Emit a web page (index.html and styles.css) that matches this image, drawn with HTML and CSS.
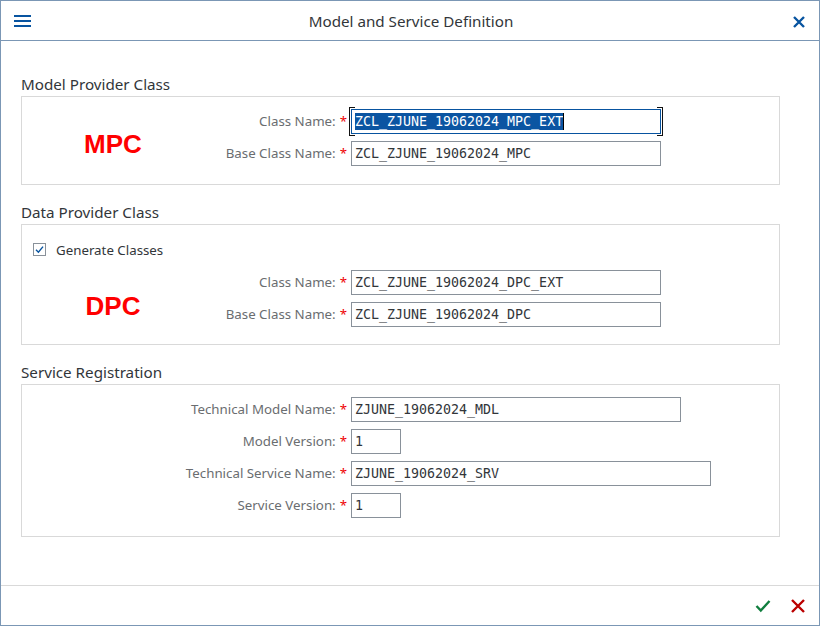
FILE: index.html
```html
<!DOCTYPE html>
<html lang="en">
<head>
<meta charset="utf-8">
<title>Model and Service Definition</title>
<link rel="stylesheet" href="styles.css">
</head>
<body>
<div class="dialog">
  <header class="dlg-header">
    <button class="icon-btn menu-btn" aria-label="Menu">
      <svg width="18" height="14" viewBox="0 0 18 14"><rect x="0" y="1" width="17" height="2" fill="#0854a0"/><rect x="0" y="6" width="17" height="2" fill="#0854a0"/><rect x="0" y="11" width="17" height="2" fill="#0854a0"/></svg>
    </button>
    <h1 class="dlg-title">Model and Service Definition</h1>
    <button class="icon-btn close-btn" aria-label="Close">
      <svg width="14" height="14" viewBox="0 0 14 14"><path d="M2 2 L12 12 M12 2 L2 12" stroke="#0854a0" stroke-width="2.4" stroke-linecap="butt"/></svg>
    </button>
  </header>

  <main class="dlg-content">
    <section class="group">
      <h2 class="group-title">Model Provider Class</h2>
      <div class="group-box box-mpc">
        <span class="annot annot-mpc">MPC</span>
        <div class="form-row">
          <label class="f-label">Class Name:<span class="req">*</span></label>
          <div class="f-input w310 focused"><span class="sel">ZCL_ZJUNE_19062024_MPC_EXT</span><span class="caret"></span></div>
        </div>
        <div class="form-row">
          <label class="f-label">Base Class Name:<span class="req">*</span></label>
          <div class="f-input w310">ZCL_ZJUNE_19062024_MPC</div>
        </div>
      </div>
    </section>

    <section class="group">
      <h2 class="group-title">Data Provider Class</h2>
      <div class="group-box box-dpc">
        <span class="annot annot-dpc">DPC</span>
        <div class="check-row">
          <span class="checkbox">
            <svg width="13" height="13" viewBox="0 0 13 13"><rect x="0.5" y="0.5" width="12" height="12" fill="#fff" stroke="#89919a"/><path d="M3 6.8 L5.4 9.2 L10 3.6" fill="none" stroke="#0854a0" stroke-width="1.4"/></svg>
          </span>
          <span class="check-text">Generate Classes</span>
        </div>
        <div class="form-row">
          <label class="f-label">Class Name:<span class="req">*</span></label>
          <div class="f-input w310">ZCL_ZJUNE_19062024_DPC_EXT</div>
        </div>
        <div class="form-row">
          <label class="f-label">Base Class Name:<span class="req">*</span></label>
          <div class="f-input w310">ZCL_ZJUNE_19062024_DPC</div>
        </div>
      </div>
    </section>

    <section class="group">
      <h2 class="group-title">Service Registration</h2>
      <div class="group-box">
        <div class="form-row">
          <label class="f-label">Technical Model Name:<span class="req">*</span></label>
          <div class="f-input w330">ZJUNE_19062024_MDL</div>
        </div>
        <div class="form-row">
          <label class="f-label">Model Version:<span class="req">*</span></label>
          <div class="f-input w50">1</div>
        </div>
        <div class="form-row">
          <label class="f-label">Technical Service Name:<span class="req">*</span></label>
          <div class="f-input w360">ZJUNE_19062024_SRV</div>
        </div>
        <div class="form-row">
          <label class="f-label">Service Version:<span class="req">*</span></label>
          <div class="f-input w50">1</div>
        </div>
      </div>
    </section>
  </main>

  <footer class="dlg-footer">
    <button class="icon-btn ok-btn" aria-label="OK">
      <svg width="16" height="14" viewBox="0 0 16 14"><path d="M1.5 7 L5.8 11.5 L14.5 2" fill="none" stroke="#107e3e" stroke-width="2.4"/></svg>
    </button>
    <button class="icon-btn cancel-btn" aria-label="Cancel">
      <svg width="16" height="16" viewBox="0 0 16 16"><path d="M2 2 L14 14 M14 2 L2 14" stroke="#bb0000" stroke-width="2.4"/></svg>
    </button>
  </footer>
</div>
</body>
</html>
```

FILE: styles.css
```css
* { box-sizing: border-box; }

html, body {
  margin: 0;
  padding: 0;
  background: #ffffff;
}

body {
  font-family: "Noto Sans", "Liberation Sans", sans-serif;
  color: #32363a;
}

.dialog {
  width: 820px;
  height: 626px;
  border: 1px solid #7b97b5;
  display: flex;
  flex-direction: column;
  background: #fff;
}

.icon-btn {
  border: 0;
  background: transparent;
  padding: 0;
  margin: 0;
  display: flex;
  align-items: center;
  justify-content: center;
  cursor: pointer;
}

/* header */
.dlg-header {
  height: 40px;
  flex: 0 0 40px;
  border-bottom: 1px solid #7b97b5;
  display: flex;
  align-items: center;
  padding: 0 10px 0 12px;
}

.menu-btn { width: 20px; height: 20px; margin-top: 1px; }

.dlg-title {
  flex: 1;
  margin: 0;
  text-align: center;
  font-size: 15.2px;
  font-weight: 400;
  color: #32363a;
  letter-spacing: 0;
}

.close-btn { width: 20px; height: 20px; margin-top: 2px; }

/* content */
.dlg-content {
  flex: 1;
  padding: 31px 0 0 20px;
}

.group + .group { margin-top: 15px; }

.group-title {
  margin: 0;
  height: 24px;
  line-height: 24px;
  font-size: 15.2px;
  font-weight: 400;
  color: #32363a;
}

.group-box {
  position: relative;
  width: 759px;
  border: 1px solid #d9d9d9;
  padding: 8px 0 15px 0;
}

.box-dpc { padding-bottom: 14px; }

.annot {
  position: absolute;
  font-family: "Liberation Sans", Arial, sans-serif;
  font-weight: 700;
  font-size: 26px;
  color: #ff0000;
  line-height: 30px;
  left: 62px;
  width: 58px;
  text-align: center;
}

.annot-mpc { top: 32px; }
.annot-dpc { top: 66px; }

.form-row {
  display: grid;
  grid-template-columns: 325px auto;
  column-gap: 4px;
  align-items: center;
  height: 32px;
}

.f-label {
  text-align: right;
  font-size: 13.3px;
  color: #6a6d70;
  white-space: nowrap;
}

.req {
  color: #e00;
  margin-left: 4px;
}

.f-input {
  position: relative;
  height: 25px;
  border: 1px solid #89919a;
  background: #fff;
  font-family: "DejaVu Sans Mono", "Liberation Mono", monospace;
  font-size: 13.3px;
  line-height: 23px;
  color: #32363a;
  padding: 0 3px;
  white-space: nowrap;
  display: flex;
  align-items: center;
}

.w310 { width: 310px; }
.w330 { width: 330px; }
.w360 { width: 360px; }
.w50 { width: 50px; }

.f-input.focused { border-color: #0854a0; }

.f-input.focused::before,
.f-input.focused::after {
  content: "";
  position: absolute;
  top: -3px;
  bottom: -3px;
  width: 5px;
  border-top: 1.5px solid #111;
  border-bottom: 1.5px solid #111;
}

.f-input.focused::before {
  left: -3px;
  border-left: 1.5px solid #111;
}

.f-input.focused::after {
  right: -3px;
  border-right: 1.5px solid #111;
}

.sel {
  background: #0b55a2;
  color: #fff;
  line-height: 17px;
}

.caret {
  display: inline-block;
  width: 1px;
  height: 17px;
  background: #000;
}

.check-row {
  display: flex;
  align-items: center;
  height: 33px;
  padding-left: 11px;
}

.checkbox { display: flex; width: 13px; height: 13px; }

.check-text {
  margin-left: 10px;
  font-size: 13.3px;
  color: #32363a;
}

/* footer */
.dlg-footer {
  height: 40px;
  flex: 0 0 40px;
  border-top: 1px solid #d9d9d9;
  display: flex;
  align-items: center;
  justify-content: flex-end;
  gap: 17px;
  padding-right: 12px;
}

.ok-btn, .cancel-btn { width: 18px; height: 18px; margin-top: 1px; }
```
